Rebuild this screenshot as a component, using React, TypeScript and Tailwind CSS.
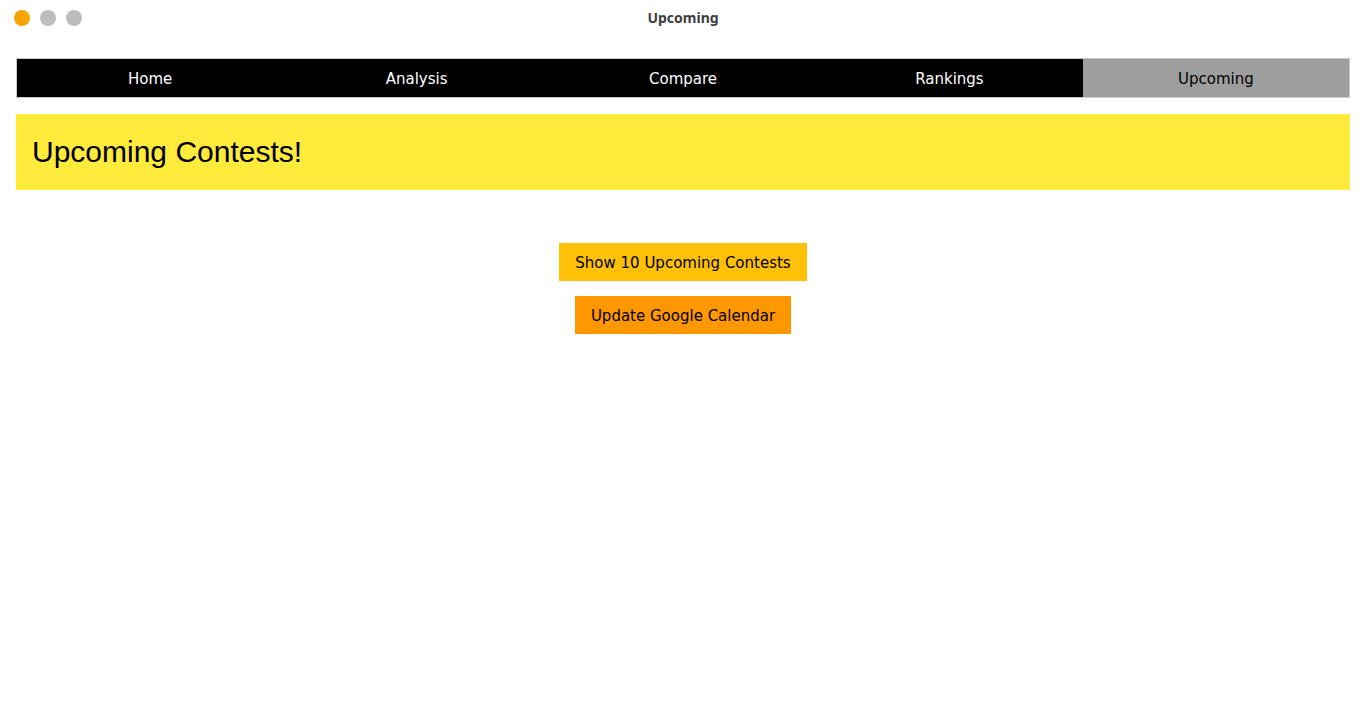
import React from "react";

export default function App() {
  const tabs = ["Home", "Analysis", "Compare", "Rankings", "Upcoming"];
  return (
    <div className="w-[1366px] h-[713px] bg-white overflow-hidden">
      <div className="relative h-[36px] flex items-center justify-center pb-[2px]">
        <div className="absolute left-[14px] top-[10px] flex gap-[10px]">
          <span className="w-[16px] h-[16px] rounded-full bg-[#f6a500]" />
          <span className="w-[16px] h-[16px] rounded-full bg-[#bdbdbd]" />
          <span className="w-[16px] h-[16px] rounded-full bg-[#bdbdbd]" />
        </div>
        <span
          className="text-[14px] font-bold text-[#3d3d3d]"
          style={{ fontFamily: '"Noto Sans", "DejaVu Sans", sans-serif' }}
        >
          Upcoming
        </span>
      </div>
      <div className="px-[16px] pt-[22px]" style={{ fontFamily: '"DejaVu Sans", sans-serif' }}>
        <div className="flex h-[40px] border border-[#c8c8c8] bg-black">
          {tabs.map((t) => (
            <div
              key={t}
              className={
                "flex-1 flex items-center justify-center pt-[2px] text-[15px] " +
                (t === "Upcoming" ? "bg-[#9e9e9e] text-black" : "text-white")
              }
            >
              {t}
            </div>
          ))}
        </div>
        <div className="mt-[16px] h-[76px] bg-[#ffeb3b] flex items-center px-[16px] pb-[2px]">
          <h1
            className="text-[30px] text-black"
            style={{ fontFamily: '"Liberation Sans", Arial, sans-serif' }}
          >
            Upcoming Contests!
          </h1>
        </div>
        <div className="flex flex-col items-center mt-[53px] gap-[15px]">
          <button className="h-[38px] px-[16px] pt-[2px] bg-[#ffc107] text-[15px] text-black">
            Show 10 Upcoming Contests
          </button>
          <button className="h-[38px] px-[16px] pt-[2px] bg-[#ff9800] text-[15px] text-black">
            Update Google Calendar
          </button>
        </div>
      </div>
    </div>
  );
}
